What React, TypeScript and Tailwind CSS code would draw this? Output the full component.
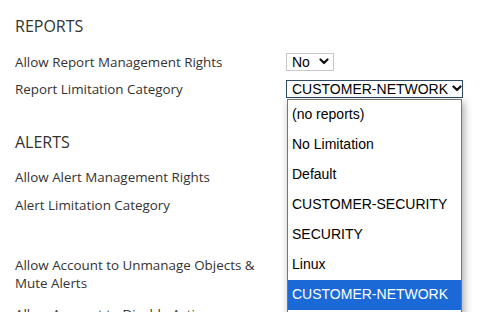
import React from 'react';

const label = "font-['Open_Sans',sans-serif] text-[13.4px] leading-[18px] text-[#333]";
const heading = "font-['Open_Sans',sans-serif] text-[16px] leading-5 text-[#333]";

const Chevron: React.FC = () => (
  <svg width="10" height="7" viewBox="0 0 10 7" className="shrink-0">
    <path d="M1.5 1.5 L5 5 L8.5 1.5" fill="none" stroke="#111" strokeWidth="2.2" strokeLinecap="round" strokeLinejoin="round" />
  </svg>
);

interface SelectBoxProps {
  value: string;
  focused?: boolean;
  className?: string;
}

const SelectBox: React.FC<SelectBoxProps> = ({ value, focused, className }) => (
  <div
    className={`flex h-[18px] items-center gap-1 whitespace-nowrap border pl-[5px] pr-[4px] font-['Liberation_Sans',Arial,sans-serif] text-[14px] leading-none text-black ${
      focused ? 'border-[#2d4b68]' : 'border-[#c8c8c8]'
    } ${className ?? ''}`}
  >
    <span className="flex-1">{value}</span>
    <Chevron />
  </div>
);

const options = ['(no reports)', 'No Limitation', 'Default', 'CUSTOMER-SECURITY', 'SECURITY', 'Linux', 'CUSTOMER-NETWORK'];

export default function App() {
  return (
    <div className="relative h-[312px] w-[498px] overflow-hidden bg-white pl-[15px] pt-4">
      <h2 className={heading}>REPORTS</h2>
      <div className="mt-3">
        <div className="grid h-[27px] grid-cols-[271px_1fr] items-center">
          <span className={label}>Allow Report Management Rights</span>
          <SelectBox value="No" className="w-[48px]" />
        </div>
        <div className="grid h-[27px] grid-cols-[271px_1fr] items-center">
          <span className={label}>Report Limitation Category</span>
          <div className="relative">
            <SelectBox value="CUSTOMER-NETWORK" focused className="w-[177px]" />
            {/* open option list */}
            <ul className="absolute left-px top-[19px] z-10 w-[175px] border border-[#767676] bg-white font-['Liberation_Sans',Arial,sans-serif] text-[14px] text-black shadow-[2px_3px_8px_rgba(0,0,0,0.35)]">
              {options.map((o, i) => (
                <li
                  key={o}
                  className={`flex h-[30px] items-center whitespace-nowrap pl-[4px] ${i === options.length - 1 ? 'bg-[#1a69d6] text-white' : ''}`}
                >
                  {o}
                </li>
              ))}
              <li className="h-[30px]" />
            </ul>
          </div>
        </div>
      </div>

      <h2 className={`${heading} mt-[30px]`}>ALERTS</h2>
      <div className="mt-[11px] w-[271px]">
        <div className="flex h-7 items-center">
          <span className={label}>Allow Alert Management Rights</span>
        </div>
        <div className="flex h-7 items-center">
          <span className={label}>Alert Limitation Category</span>
        </div>
        <div className="h-[37px]" />
        <div className="pb-[8px]">
          <p className={`${label} w-[256px]`}>Allow Account to Unmanage Objects &amp; Mute Alerts</p>
        </div>
        <div className="flex h-7 items-center">
          <span className={label}>Allow Account to Disable Actions</span>
        </div>
      </div>
    </div>
  );
}
